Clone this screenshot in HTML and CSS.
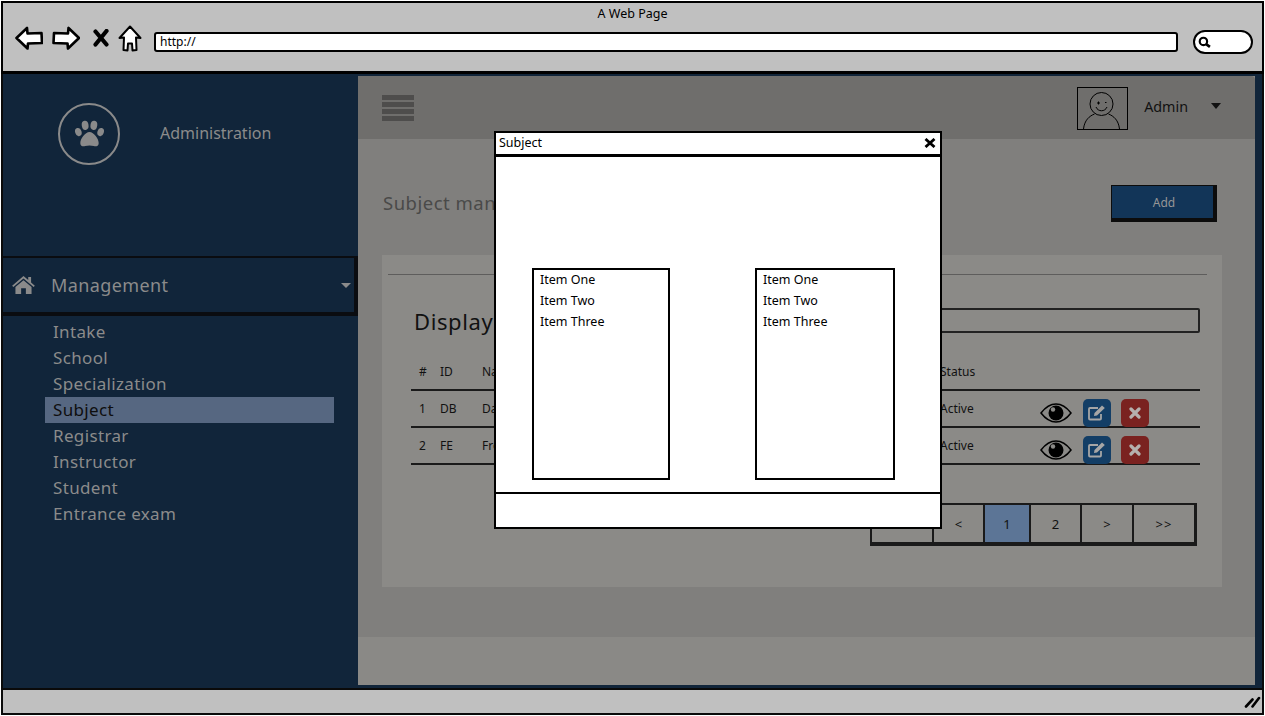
FILE: index.html
```html
<!DOCTYPE html>
<html lang="en">
<head>
<meta charset="utf-8">
<title>A Web Page</title>
<link rel="stylesheet" href="styles.css">
</head>
<body>
<div class="window">
  <header class="chrome">
    <div class="chrome-title">A Web Page</div>
    <div class="chrome-row">
      <svg class="ic-back" viewBox="0 0 28 24"><path d="M1.500 12 12 2l.5 5.500 14-.5.500 10-14 .5-.5 5z" fill="#fff" stroke="#000" stroke-width="2.600" stroke-linejoin="round"/></svg>
      <svg class="ic-fwd" viewBox="0 0 28 24"><path d="M27 12 16.500 2l-.5 5.500-14-.5-.5 10 14 .5.500 5z" fill="#fff" stroke="#000" stroke-width="2.600" stroke-linejoin="round"/></svg>
      <svg class="ic-stop" viewBox="0 0 16 18"><path d="M2.500 2.500 13.500 15.500M13.500 2 2.500 15.500" stroke="#000" stroke-width="4.200" stroke-linecap="round"/></svg>
      <svg class="ic-home" viewBox="0 0 24 27"><path d="M12 1.500 22.500 13l-4.500-.5.500 12.500-4 .5-.5-7h-4l-.5 7-4-.5.500-12.500-4.500.5z" fill="#fff" stroke="#000" stroke-width="2" stroke-linejoin="round"/></svg>
      <div class="url">http://</div>
      <div class="search"><svg class="ic-search" viewBox="0 0 12 12"><circle cx="5" cy="5" r="3.400" fill="none" stroke="#000" stroke-width="2"/><path d="M7.500 7.500 11 10" stroke="#000" stroke-width="2.400"/></svg></div>
    </div>
  </header>

  <div class="body">
    <aside class="sidebar">
      <div class="brand">
        <div class="logo">
          <svg class="ic-paw" viewBox="0 0 32 28" fill="#8a8a8a"><ellipse cx="4.500" cy="12" rx="3.300" ry="4.300" transform="rotate(-18 4.500 12)"/><ellipse cx="11.500" cy="5" rx="3.500" ry="4.800" transform="rotate(-8 11.500 5)"/><ellipse cx="20.500" cy="5" rx="3.500" ry="4.800" transform="rotate(8 20.500 5)"/><ellipse cx="27.500" cy="12" rx="3.300" ry="4.300" transform="rotate(18 27.500 12)"/><path d="M16 12c4.500 0 9.500 7 9.500 11.500 0 3.500-3.500 3.500-5 3-3-1-6-1-9 0-1.500.5-5 .5-5-3C6.500 19 11.500 12 16 12z"/></svg>
        </div>
        <div class="brand-name">Administration</div>
      </div>
      <div class="menu-head">
        <svg class="ic-house" viewBox="0 0 24 19" fill="#8a8a8a"><path d="M12 0 0 10.200l1.300 1.500L12 2.600l10.700 9.100 1.300-1.500-4-3.400V1h-3v3.300z"/><path d="M12 4.500 3.500 11.700V19h6v-6h5v6h6v-7.300z"/></svg>
        <span class="menu-label">Management</span>
        <span class="caret caret-light"></span>
      </div>
      <ul class="menu">
        <li>Intake</li>
        <li>School</li>
        <li>Specialization</li>
        <li class="active">Subject</li>
        <li>Registrar</li>
        <li>Instructor</li>
        <li>Student</li>
        <li>Entrance exam</li>
      </ul>
    </aside>

    <main class="main">
      <div class="topbar">
        <div class="burger"><i></i><i></i><i></i><i></i></div>
        <svg class="avatar" viewBox="0 0 51 43"><rect x=".5" y=".5" width="50" height="42" fill="none" stroke="#000"/><circle cx="24.500" cy="17" r="11.500" fill="none" stroke="#000"/><path d="M20 16h3M21.500 14.500v3M28 15.500h1.500M19 20c2 5 9 5 11 0M6.500 42c1-9 6-13 11-15M42.500 42c-1-9-6-13-11-15" fill="none" stroke="#000"/></svg>
        <span class="admin">Admin</span>
        <span class="caret caret-dark"></span>
      </div>
      <div class="content">
        <div class="title-row">
          <h1 class="page-title">Subject management</h1>
          <button class="add">Add</button>
        </div>
        <section class="card">
          <div class="rule"></div>
          <div class="display-row">
            <h2 class="display">Display</h2>
            <div class="filter"></div>
          </div>
          <table class="grid">
            <colgroup><col class="c1"><col class="c2"><col class="c3"><col class="c4"><col></colgroup>
            <thead><tr><th>#</th><th>ID</th><th>Name</th><th>Status</th><th></th></tr></thead>
            <tbody>
              <tr>
                <td>1</td><td>DB</td><td>Database</td><td class="status">Active</td>
                <td class="action-cell"><div class="actions">
                  <svg class="ic-eye" viewBox="0 0 32 20"><path d="M1 10C6 3.500 11 1 16 1s10 2.500 15 9c-5 6.500-10 9-15 9S6 16.500 1 10z" fill="none" stroke="#000" stroke-width="1.500"/><circle cx="16" cy="10" r="7.500"/><circle cx="13" cy="6.500" r="2.200" fill="#8b8a87"/></svg>
                  <div class="btn btn-blue"><svg class="ic-edit" viewBox="0 0 18 16"><path d="M13 9v4.500a1 1 0 0 1-1 1H2a1 1 0 0 1-1-1V4a1 1 0 0 1 1-1h8" fill="none" stroke="#a6a6a6" stroke-width="1.800"/><path d="M6 11l.5-3L14 .5 16.800 3 9 10.500z" fill="#a6a6a6"/></svg></div>
                  <div class="btn btn-red"><svg class="ic-x" viewBox="0 0 12 12"><path d="M2 2l8 8M10 2l-8 8" stroke="#b5b0ae" stroke-width="3.200" stroke-linecap="round"/></svg></div>
                </div></td>
              </tr>
              <tr>
                <td>2</td><td>FE</td><td>Frontend</td><td class="status">Active</td>
                <td class="action-cell"><div class="actions">
                  <svg class="ic-eye" viewBox="0 0 32 20"><path d="M1 10C6 3.500 11 1 16 1s10 2.500 15 9c-5 6.500-10 9-15 9S6 16.500 1 10z" fill="none" stroke="#000" stroke-width="1.500"/><circle cx="16" cy="10" r="7.500"/><circle cx="13" cy="6.500" r="2.200" fill="#8b8a87"/></svg>
                  <div class="btn btn-blue"><svg class="ic-edit" viewBox="0 0 18 16"><path d="M13 9v4.500a1 1 0 0 1-1 1H2a1 1 0 0 1-1-1V4a1 1 0 0 1 1-1h8" fill="none" stroke="#a6a6a6" stroke-width="1.800"/><path d="M6 11l.5-3L14 .5 16.800 3 9 10.500z" fill="#a6a6a6"/></svg></div>
                  <div class="btn btn-red"><svg class="ic-x" viewBox="0 0 12 12"><path d="M2 2l8 8M10 2l-8 8" stroke="#b5b0ae" stroke-width="3.200" stroke-linecap="round"/></svg></div>
                </div></td>
              </tr>
            </tbody>
          </table>
          <nav class="pager">
            <span class="p1">&lt;&lt;</span><span class="p2">&lt;</span><span class="p3 current">1</span><span class="p2">2</span><span class="p4">&gt;</span><span class="p5">&gt;&gt;</span>
          </nav>
        </section>
      </div>
      <div class="foot"></div>
    </main>
  </div>

  <footer class="statusbar">
    <svg class="ic-grip" viewBox="0 0 16 13"><path d="M1.500 11.500 8 4.500M8 11.500 14.500 3" stroke="#000" stroke-width="2.600" stroke-linecap="round"/></svg>
  </footer>

  <div class="modal">
    <div class="modal-head"><span>Subject</span>
      <svg class="ic-close" viewBox="0 0 12 10"><path d="M1.500 1 10.500 9M10.500 1 1.500 9" stroke="#000" stroke-width="2.800"/></svg>
    </div>
    <div class="modal-body">
      <ul class="listbox"><li>Item One</li><li>Item Two</li><li>Item Three</li></ul>
      <ul class="listbox"><li>Item One</li><li>Item Two</li><li>Item Three</li></ul>
    </div>
    <div class="modal-foot"></div>
  </div>
</div>
</body>
</html>
```
FILE: styles.css
```css
* { box-sizing: border-box; }
html, body { margin: 0; padding: 0; }
body { font-family: "Noto Sans", "DejaVu Sans", sans-serif; overflow: hidden; background: #fff; }
h1, h2, ul { margin: 0; padding: 0; font-weight: 400; }
ul { list-style: none; }
svg { display: block; flex: none; }

.window {
  position: relative;
  width: 1265px;
  height: 716px;
  padding: 1px;
  display: flex;
  flex-direction: column;
}

/* browser chrome */
.chrome {
  height: 73px;
  flex: none;
  background: #c0c0c0;
  border: 2px solid #000;
  border-bottom-width: 3px;
  padding-left: 12px;
}
.chrome-title { font-size: 12.500px; line-height: 16px; margin-top: 3px; text-align: center; color: #000; padding-right: 12px; }
.chrome-row { display: flex; align-items: center; height: 32px; }
.ic-back { width: 28px; height: 24px; }
.ic-fwd { width: 28px; height: 24px; margin-left: 9px; }
.ic-stop { width: 16px; height: 18px; margin-left: 13px; }
.ic-home { width: 24px; height: 27px; margin-left: 9px; }
.url {
  width: 1024px;
  height: 20px;
  margin-left: 12px;
  margin-top: 8px;
  padding-left: 4px;
  background: #fff;
  border: 2px solid #000;
  border-radius: 3px;
  font-size: 12px;
  line-height: 16px;
  color: #000;
}
.search {
  width: 60px;
  height: 24px;
  margin-left: 15px;
  margin-top: 7px;
  padding: 4px 0 0 3px;
  background: #fff;
  border: 2px solid #000;
  border-radius: 12px;
}
.ic-search { width: 13px; height: 13px; }

/* app area */
.body { flex: 1; display: flex; background: #11253a; min-height: 0; border-left: 2px solid #0a0a0a; border-right: 2px solid #0a0a0a; }
.sidebar { width: 355px; flex: none; color: #8b8b8b; }
.brand { display: flex; align-items: center; height: 182px; padding: 0 0 63px 55px; }
.logo {
  width: 62px;
  height: 62px;
  border: 2px solid #8a8a8a;
  border-radius: 50%;
  display: flex;
  align-items: center;
  justify-content: center;
}
.ic-paw { width: 31px; height: 28px; }
.brand-name { margin: 0 0 2px 40px; font-size: 16px; }

.menu-head {
  height: 60px;
  display: flex;
  align-items: center;
  border: 1px solid #0a0c10;
  border-width: 2px 4px 4px 0;
  padding: 0 3px 0 9px;
}
.ic-house { width: 23px; height: 18px; }
.menu-label { margin-left: 16px; font-size: 18px; flex: 1; letter-spacing: .4px; }
.caret { width: 0; height: 0; border-left: 5.500px solid transparent; border-right: 5.500px solid transparent; }
.caret-light { border-top: 5px solid #8b8b8b; }
.caret-dark { border-top: 6px solid #111; margin-left: 23px; margin-bottom: 3px; }
.menu { margin-top: 3px; padding-left: 42px; }
.menu li { width: 289px; height: 26px; line-height: 25px; padding-left: 8px; font-size: 17px; letter-spacing: .35px; }
.menu .active { background: #566781; color: #0e0e0e; }

.main { flex: 1; margin: 2px 7px 3px 0; display: flex; flex-direction: column; min-width: 0; background: #8a8986; }
.topbar {
  height: 63px;
  flex: none;
  background: #6f6e6c;
  border-top-right-radius: 4px;
  display: flex;
  align-items: center;
  padding: 0 34px 0 24px;
}
.burger { display: flex; flex-direction: column; gap: 2px; margin-top: 1px; }
.burger i { display: block; width: 32px; height: 5px; background: #4e4d4c; }
.avatar { width: 51px; height: 43px; margin-left: auto; margin-top: 1px; }
.admin { margin: 0 0 3px 16px; font-size: 14.300px; color: #111; }

.content { flex: 1; background: #807f7d; padding: 46px 33px 0 24px; min-height: 0; }
.title-row { height: 37px; display: flex; align-items: center; justify-content: space-between; padding-right: 5px; }
.page-title { font-size: 18.500px; color: #4a4a49; letter-spacing: .5px; margin: 0 0 2px 1px; }
.add {
  width: 106px;
  height: 37px;
  background: #123558;
  border: 2px solid #0c0c0c;
  border-width: 1px 4px 4px 1px;
  color: #969696;
  font: 12px "Noto Sans", sans-serif;
  padding: 0 0 0 3px;
}
.foot { height: 48px; flex: none; }

.card { margin-top: 33px; height: 332px; background: #8b8a87; padding-top: 19px; }
.rule { height: 1px; background: #5e5d5c; margin: 0 15px 0 6px; }
.display-row { display: flex; align-items: center; justify-content: space-between; height: 25px; margin: 33px 22px 0 32px; }
.display { font-size: 22px; color: #111; letter-spacing: .6px; }
.filter { width: 600px; height: 25px; border: 2px solid #222; border-radius: 2px; }

.grid { width: 789px; margin: 20px 0 0 29px; border-collapse: collapse; table-layout: fixed; font-size: 12px; color: #111; }
.c1 { width: 29px; }
.c2 { width: 42px; }
.c3 { width: 458px; }
.c4 { width: 100px; }
.grid th, .grid td { height: 37px; padding: 0; text-align: left; font-weight: 400; border-bottom: 2px solid #1a1a1a; white-space: nowrap; }
.grid th:first-child, .grid td:first-child { padding-left: 8px; }
.grid td.action-cell { vertical-align: bottom; }
.grid td.status { padding-bottom: 1px; }
.actions { display: flex; align-items: center; height: 28px; margin-bottom: -1px; }
.ic-eye { width: 32px; height: 20px; margin-right: 11px; }
.btn { width: 28px; height: 28px; border-radius: 5px; display: flex; align-items: center; justify-content: center; margin-right: 10px; }
.btn-blue { background: #133e66; }
.btn-red { background: #7a2220; }
.ic-edit { width: 18px; height: 16px; }
.ic-x { width: 12px; height: 12px; }

.pager {
  display: flex;
  width: 327px;
  height: 43px;
  margin: 38px 0 0 488px;
  border: 2px solid #1a1a1a;
  border-bottom-width: 4px;
  border-right-width: 3px;
  font-size: 13px;
  color: #111;
}
.pager span { display: flex; align-items: center; justify-content: center; border-right: 2px solid #1a1a1a; }
.pager span:last-child { border-right: 0; }
.p1 { width: 62px; }
.p2 { width: 51px; }
.p3 { width: 46px; }
.p4 { width: 52px; }
.p5 { flex: 1; letter-spacing: 1px; }
.current { background: #5c7596; }

/* status bar */
.statusbar {
  height: 27px;
  flex: none;
  background: #c0c0c0;
  border: 2px solid #0a0a0a;
  display: flex;
  align-items: center;
  justify-content: flex-end;
  padding-right: 1px;
}
.ic-grip { width: 17px; height: 13px; }

/* modal dialog over the page */
.modal {
  position: absolute;
  left: 494px;
  top: 131px;
  width: 448px;
  height: 398px;
  background: #fff;
  border: 2px solid #000;
  display: flex;
  flex-direction: column;
  color: #000;
}
.modal-head {
  height: 24px;
  flex: none;
  border-bottom: 3px solid #000;
  display: flex;
  align-items: center;
  justify-content: space-between;
  padding: 0 4px 2px 3px;
  font-size: 12.500px;
}
.ic-close { width: 12px; height: 10px; }
.modal-body { flex: 1; display: flex; gap: 85px; padding: 111px 0 0 36px; }
.listbox { width: 138px; height: 212px; border: 2px solid #000; padding: 0 0 0 6px; font-size: 12.500px; }
.listbox + .listbox { width: 140px; }
.listbox li { height: 21px; line-height: 19px; }
.modal-foot { height: 35px; flex: none; border-top: 2px solid #000; }
```
